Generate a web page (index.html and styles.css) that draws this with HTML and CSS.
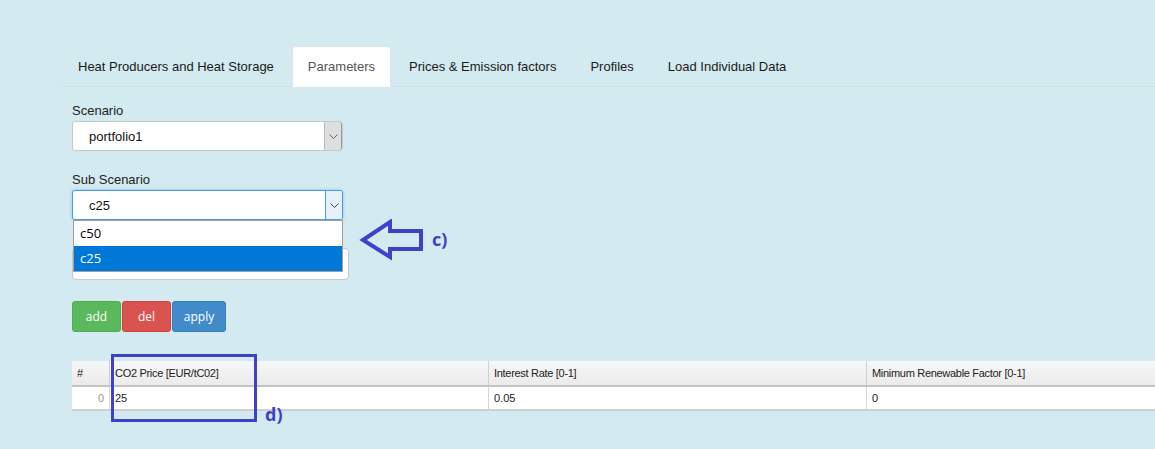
FILE: index.html
```html
<!DOCTYPE html>
<html>
<head>
<meta charset="utf-8">
<link rel="stylesheet" href="styles.css">
</head>
<body>
<div class="page">
  <ul class="tabs">
    <li class="tab">Heat Producers and Heat Storage</li>
    <li class="tab active">Parameters</li>
    <li class="tab">Prices &amp; Emission factors</li>
    <li class="tab">Profiles</li>
    <li class="tab">Load Individual Data</li>
  </ul>
  <div class="content">
    <div class="field">
      <label class="label">Scenario</label>
      <div class="select">
        <span class="select-value">portfolio1</span>
        <span class="select-arrow"><svg width="9" height="5" viewBox="0 0 9 5"><path d="M0.5 0.5 L4.5 4.5 L8.5 0.5" fill="none" stroke="#666" stroke-width="1"/></svg></span>
      </div>
    </div>
    <div class="field sub">
      <label class="label">Sub Scenario</label>
      <div class="select focused">
        <span class="select-value">c25</span>
        <span class="select-arrow"><svg width="9" height="5" viewBox="0 0 9 5"><path d="M0.5 0.5 L4.5 4.5 L8.5 0.5" fill="none" stroke="#444" stroke-width="1"/></svg></span>
        <ul class="dropdown">
          <li class="opt">c50</li>
          <li class="opt selected">c25</li>
        </ul>
      </div>
    </div>
    <div class="field newsub">
      <div class="label-space"></div>
      <div class="input"></div>
    </div>
    <div class="buttons">
      <button class="btn add">add</button>
      <button class="btn del">del</button>
      <button class="btn apply">apply</button>
    </div>
    <div class="table-wrap">
      <table class="grid">
        <thead>
          <tr>
            <th class="idx">#</th>
            <th class="c1">CO2 Price [EUR/tC02]</th>
            <th class="c2">Interest Rate [0-1]</th>
            <th class="c3">Minimum Renewable Factor [0-1]</th>
          </tr>
        </thead>
        <tbody>
          <tr>
            <td class="idx">0</td>
            <td>25</td>
            <td>0.05</td>
            <td>0</td>
          </tr>
        </tbody>
      </table>
    </div>
  </div>
</div>
<svg class="annot-arrow" width="70" height="44" viewBox="0 0 70 44">
  <path d="M4 21 L31 3 L31 12 L62 12 L62 30 L31 30 L31 38 Z" fill="none" stroke="#4040c8" stroke-width="4" stroke-linejoin="miter"/>
</svg>
<span class="annot-c">c)</span>
<div class="annot-box"></div>
<span class="annot-d">d)</span>
</body>
</html>
```

FILE: styles.css
```css
html, body {
  margin: 0;
  padding: 0;
  background: #d3eaf0;
  overflow: hidden;
  font-family: "Liberation Sans", Arial, sans-serif;
  color: #222;
}
.page {
  padding: 46px 0 0 62px;
}
.tabs {
  list-style: none;
  margin: 0;
  padding: 0;
  display: flex;
  border-bottom: 1px solid #dcdcdc;
}
.tab {
  padding: 10px 15px;
  line-height: 19px;
  font-size: 13px;
  margin-right: 2px;
  margin-bottom: -1px;
  border: 1px solid transparent;
  border-radius: 4px 4px 0 0;
  color: #1a1a1a;
}
.tab.active {
  background: #fff;
  border-color: #e2e2e2 #e2e2e2 transparent;
  color: #555;
}
.content {
  padding: 12px 0 0 10px;
}
.field {
  display: flex;
  flex-direction: column;
  width: 271px;
}
.label {
  font-size: 13px;
  line-height: 20px;
  margin-bottom: 2px;
  padding-top: 2px;
  height: 18px;
  color: #222;
}
.field.sub {
  margin-top: 17px;
  position: relative;
  z-index: 2;
}
.select {
  position: relative;
  height: 28px;
  background: #fff;
  border: 1px solid #c8c8c8;
  border-radius: 3px;
  display: flex;
  align-items: center;
}
.select-value {
  flex: 1;
  padding-left: 16px;
  font-size: 13px;
  color: #111;
}
.select-arrow {
  width: 16px;
  height: 28px;
  background: #dedede;
  border-left: 1px solid #bbb;
  border-right: 1px solid #999;
  border-radius: 0 3px 3px 0;
  display: flex;
  align-items: center;
  justify-content: center;
}
.select.focused {
  border-color: #4a9ae0;
  box-shadow: 0 0 3px rgba(80, 160, 230, 0.6);
}
.select.focused .select-arrow {
  background: #e5f1fb;
  border-left: 1px solid #4a9ae0;
  border-right: none;
}
.dropdown {
  position: absolute;
  left: 0;
  top: 29px;
  width: 268px;
  margin: 0;
  padding: 0;
  list-style: none;
  background: #fff;
  border: 1px solid #a0a0a0;
  z-index: 5;
}
.opt {
  height: 25px;
  line-height: 25px;
  padding-left: 6px;
  font-size: 13px;
  color: #000;
  font-family: "Open Sans", "Liberation Sans", sans-serif;
}
.opt.selected {
  background: #0078d7;
  color: #fff;
}
.field.newsub {
  margin-top: 6px;
  width: 277px;
}
.label-space {
  height: 22px;
}
.input {
  height: 30px;
  background: #fff;
  border: 1px solid #c8c8c8;
  border-radius: 4px;
}
.buttons {
  display: flex;
  margin-top: 21px;
}
.btn {
  height: 31px;
  border: 1px solid transparent;
  border-radius: 3px;
  color: #fff;
  font-family: "Open Sans", "Liberation Sans", sans-serif;
  font-size: 12px;
  padding: 0;
  margin-right: 1px;
  cursor: pointer;
}
.btn.add { width: 49px; background: #5cb85c; border-color: #4cae4c; }
.btn.del { width: 49px; background: #d9534f; border-color: #d43f3a; }
.btn.apply { width: 54px; background: #428bca; border-color: #357ebd; }
.table-wrap {
  margin-top: 29px;
}
.grid {
  border-collapse: collapse;
  table-layout: fixed;
  width: 1180px;
  font-size: 11px;
  font-family: "Liberation Sans", Arial, sans-serif;
}
.grid th {
  height: 24px;
  text-align: left;
  font-weight: normal;
  color: #222;
  padding: 0 5px;
  background: linear-gradient(#f7f7f7, #ebebeb);
  border-left: 1px solid #d0d0d0;
  border-bottom: 2px solid #c4c4c4;
  letter-spacing: -0.3px;
}
.grid td {
  height: 22px;
  padding: 0 5px;
  background: #fff;
  border-left: 1px solid #d6d6d6;
  border-bottom: 2px solid #cfcfcf;
  color: #222;
}
.grid th.idx { width: 27px; border-left: none; }
.grid td.idx { text-align: right; color: #999; border-left: none; }
.grid th.c1 { width: 368px; }
.grid th.c2 { width: 367px; }
.annot-arrow {
  position: absolute;
  left: 359px;
  top: 219px;
}
.annot-c {
  position: absolute;
  left: 432px;
  top: 227px;
  font-family: "Open Sans", "Liberation Sans", sans-serif;
  font-weight: bold;
  font-size: 18px;
  color: #4040c8;
}
.annot-box {
  position: absolute;
  left: 111px;
  top: 354px;
  width: 140px;
  height: 62px;
  border: 3px solid #4040c8;
}
.annot-d {
  position: absolute;
  left: 265px;
  top: 402px;
  font-family: "Open Sans", "Liberation Sans", sans-serif;
  font-weight: bold;
  font-size: 18px;
  color: #4040c8;
}
```
